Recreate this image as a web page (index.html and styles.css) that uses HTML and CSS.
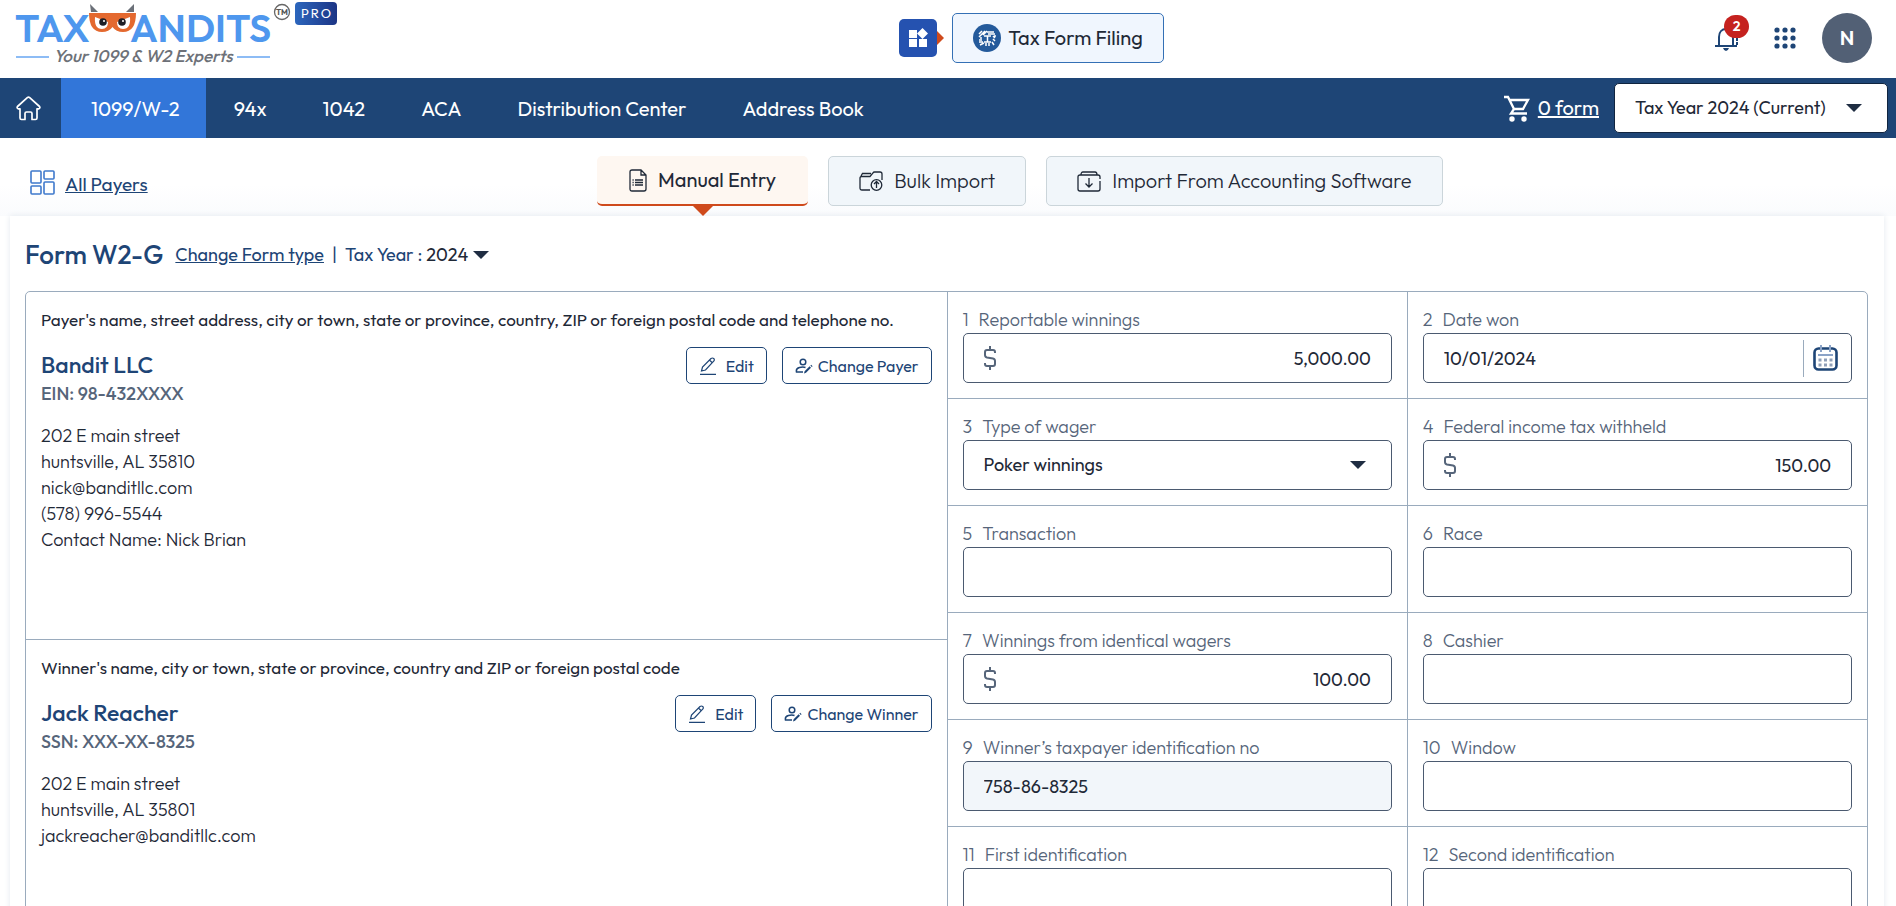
FILE: index.html
```html
<!DOCTYPE html>
<html lang="en">
<head>
<meta charset="utf-8">
<title>Form W2-G</title>
<link rel="stylesheet" href="styles.css">
</head>
<body>
<header class="topbar">
  <a class="brand" href="#" aria-label="Home page">
    <svg class="brand-logo" width="280" height="68" viewBox="0 0 280 68">
      <text class="logo-word" x="3" y="42">TAX</text>
      <text class="logo-word" x="118" y="42">ANDITS</text>
      <path fill="#6b7078" d="M78 4l8 8h-7zM122 4l-8 8h8z"/>
      <path fill="#e4692f" d="M77 13h47q0 19-13 19q-7 0-10.500-5q-3.500 5-10.500 5q-13 0-13-19z"/>
      <path fill="#fff" d="M83 17l13 5q0 7-6 7q-8 0-7-12zM118 17l-13 5q0 7 6 7q8 0 7-12z"/>
      <circle cx="91" cy="22" r="3.800" fill="#1d1f26"/><circle cx="110" cy="22" r="3.800" fill="#1d1f26"/>
      <circle cx="92" cy="21" r="1" fill="#fff"/><circle cx="111" cy="21" r="1" fill="#fff"/>
      <path stroke="#8dbcf5" stroke-width="2" d="M4 57h33M225 57h33"/>
      <text class="logo-tag" x="131" y="62" text-anchor="middle">Your 1099 &amp; W2 Experts</text>
      <circle cx="270" cy="12" r="7.500" fill="none" stroke="#666" stroke-width="1.300"/>
      <text class="logo-tm" x="270" y="15" text-anchor="middle">TM</text>
    </svg>
    <span class="pro">PRO</span>
  </a>
  <div class="product">
    <button class="product-switch" aria-label="Switch product">
      <svg width="20" height="20" viewBox="0 0 20 20" fill="#fff"><path d="M1 2h8v8H1zM1 11h8v8H1zM11 11h8v8h-8zM14.500 0l5.500 5.500-5.500 5.500L9 5.500z"/></svg>
    </button>
    <a class="product-name" href="#">
      <svg width="28" height="28" viewBox="0 0 28 28" fill="none" stroke="#fff" stroke-width="1.500">
        <circle cx="14" cy="14" r="14" fill="#245a9b" stroke="none"/>
        <path d="M6 10l3-3M6 13l6-6M10 11l4-4M14 8h7M15 10h7M20 12l2 2M20 15l2 2M19 18l2 3M6 16h3M6 18h4M7 21l4-2M13 22v-3M16 22v-3M11 12h7M14.500 12v6M11 18h7M8 13v2M22 11v2"/>
      </svg>
      Tax Form Filing
    </a>
  </div>
  <div class="account">
    <button class="bell" aria-label="Notifications">
      <svg width="28" height="28" viewBox="0 0 28 28" fill="none" stroke="#1e4576" stroke-width="2"><path d="M5 22V13c0-5 3-8 7-8s7 3 7 8v9M1 22h22"/><path fill="#1e4576" stroke="none" d="M9 24h6q-1 3-3 3t-3-3zM22 14h2v3h-2zM22 18h2v3h-2z"/></svg>
      <span class="badge">2</span>
    </button>
    <button class="apps" aria-label="Apps">
      <svg width="22" height="22" viewBox="0 0 22 22" fill="#1e4576"><circle cx="3" cy="3" r="2.600"/><circle cx="11" cy="3" r="2.600"/><circle cx="19" cy="3" r="2.600"/><circle cx="3" cy="11" r="2.600"/><circle cx="11" cy="11" r="2.600"/><circle cx="19" cy="11" r="2.600"/><circle cx="3" cy="19" r="2.600"/><circle cx="11" cy="19" r="2.600"/><circle cx="19" cy="19" r="2.600"/></svg>
    </button>
    <button class="avatar">N</button>
  </div>
</header>

<nav class="nav">
  <a class="nav-home" href="#" aria-label="Home">
    <svg width="25" height="25" viewBox="0 0 25 25" fill="none" stroke="#fff" stroke-width="1.700" stroke-linejoin="round"><path d="M1.500 10.500L11.300 1.700q1.200-1 2.400 0l9.800 8.800q1 1.600-.6 2.300H21V22q0 1.500-1.500 1.500H16v-6q0-1.500-1.500-1.500h-4Q9 16 9 17.500v6H5.500Q4 23.500 4 22v-9.200H2.100q-1.600-.7-.6-2.300z"/></svg>
  </a>
  <a class="nav-item active" href="#">1099/W-2</a>
  <a class="nav-item" href="#">94x</a>
  <a class="nav-item" href="#">1042</a>
  <a class="nav-item" href="#">ACA</a>
  <a class="nav-item" href="#">Distribution Center</a>
  <a class="nav-item" href="#">Address Book</a>
  <a class="cart" href="#">
    <svg width="27" height="27" viewBox="0 0 27 27" fill="none" stroke="#fff" stroke-width="2.300"><path d="M1 2h4l6 12h9l5-9H6.500M11 14l-3 4.500h16"/><circle cx="9" cy="24" r="2.700" fill="#fff" stroke="none"/><circle cx="21" cy="24" r="2.700" fill="#fff" stroke="none"/></svg>
    <span>0 form</span>
  </a>
  <div class="stack year-select">
    <select aria-label="Tax year"><option>Tax Year 2024 (Current)</option></select>
    <svg class="caret" width="16" height="8" viewBox="0 0 16 8"><path d="M0 0h16L8 8z"/></svg>
  </div>
</nav>

<main class="page">
  <div class="entrybar">
    <a class="all-payers" href="#">
      <svg width="26" height="26" viewBox="0 0 26 26" fill="none" stroke="#3f79cc" stroke-width="1.600"><rect x="1" y="1" width="10" height="12" rx="1"/><rect x="14" y="1" width="10" height="8" rx="1"/><rect x="1" y="16" width="10" height="8" rx="1"/><rect x="14" y="12" width="10" height="12" rx="1"/></svg>
      <span>All Payers</span>
    </a>
    <div class="tabs">
      <button class="tab tab-on">
        <svg width="18" height="23" viewBox="0 0 18 23" fill="none" stroke="#1f2937" stroke-width="1.300"><path d="M3 1h9l5 5v14q0 2-2 2H3q-2 0-2-2V3q0-2 2-2zM12 1v5h5M6 11h8M6 13.500h8M6 16h8M3.500 11h1.200M3.500 13.500h1.200M3.500 16h1.200"/></svg>
        Manual Entry
      </button>
      <button class="tab">
        <svg width="24" height="20" viewBox="0 0 24 20" fill="none" stroke="#1f2937" stroke-width="1.300"><path d="M11 19H3q-2 0-2-2V7q0-1.500 1.500-1.500H11L14 2q.5-1 1.500-1H21q2 0 2 2v6M2 5l1.500-2.500h8.500"/><circle cx="17.500" cy="14" r="5.300"/><path d="M17.500 17v-6M15 13l2.500-2.500L20 13"/></svg>
        Bulk Import
      </button>
      <button class="tab">
        <svg width="24" height="21" viewBox="0 0 24 21" fill="none" stroke="#1f2937" stroke-width="1.300"><path d="M23 8V6q0-2-2-2H3Q1 4 1 6v12q0 2 2 2h18q2 0 2-2v-8M4 4q0-3 2-3h12q2 0 2 3M12 7v9M8.500 12.500L12 16l3.500-3.500"/></svg>
        Import From Accounting Software
      </button>
    </div>
  </div>

  <section class="card">
    <div class="title-row">
      <h1>Form W2-G</h1>
      <a href="#">Change Form type</a>
      <span class="bar">|</span>
      <label for="form-year">Tax Year :</label>
      <div class="stack form-year">
        <select id="form-year"><option>2024</option></select>
        <svg class="caret" width="16" height="8" viewBox="0 0 16 8"><path d="M0 0h16L8 8z"/></svg>
      </div>
    </div>

    <div class="form">
      <div class="parties">
        <section class="party">
          <p class="party-label">Payer's name, street address, city or town, state or province, country, ZIP or foreign postal code and telephone no.</p>
          <div class="party-head">
            <div><h2>Bandit LLC</h2><p class="tin">EIN: 98-432XXXX</p></div>
            <div class="actions">
              <button class="btn btn-edit"><svg width="18" height="18" viewBox="0 0 18 18" fill="none" stroke="#1e4576" stroke-width="1.200"><path d="M1 17.300h16M2.500 14l1-4L12 1.500q1.500-1 2.700 0t0 2.700L6.500 13zM10.500 3L13 5.500"/></svg>Edit</button>
              <button class="btn"><svg width="18" height="16" viewBox="0 0 18 16" fill="none" stroke="#1e4576" stroke-width="1.500"><circle cx="8" cy="4" r="2.800"/><path d="M8 14H1.500q-.8-3.500 3-4.500 3.500-.8 6 0"/><path fill="#1e4576" stroke="none" d="M9 15.500l.6-2.200 5-5 1.400 1.400-5 5zM15.400 7.600l.8-.8 1.400 1.400-.8.8z"/></svg>Change Payer</button>
            </div>
          </div>
          <address>202 E main street<br>huntsville, AL 35810<br>nick@banditllc.com<br>(578) 996-5544<br>Contact Name: Nick Brian</address>
        </section>
        <section class="party">
          <p class="party-label">Winner's name, city or town, state or province, country and ZIP or foreign postal code</p>
          <div class="party-head">
            <div><h2>Jack Reacher</h2><p class="tin">SSN: XXX-XX-8325</p></div>
            <div class="actions">
              <button class="btn btn-edit"><svg width="18" height="18" viewBox="0 0 18 18" fill="none" stroke="#1e4576" stroke-width="1.200"><path d="M1 17.300h16M2.500 14l1-4L12 1.500q1.500-1 2.700 0t0 2.700L6.500 13zM10.500 3L13 5.500"/></svg>Edit</button>
              <button class="btn"><svg width="18" height="16" viewBox="0 0 18 16" fill="none" stroke="#1e4576" stroke-width="1.500"><circle cx="8" cy="4" r="2.800"/><path d="M8 14H1.500q-.8-3.500 3-4.500 3.500-.8 6 0"/><path fill="#1e4576" stroke="none" d="M9 15.500l.6-2.200 5-5 1.400 1.400-5 5zM15.400 7.600l.8-.8 1.400 1.400-.8.8z"/></svg>Change Winner</button>
            </div>
          </div>
          <address>202 E main street<br>huntsville, AL 35801<br>jackreacher@banditllc.com</address>
        </section>
      </div>

      <div class="boxes">
        <div class="box"><label for="b1"><span>1</span>Reportable winnings</label>
          <div class="stack money"><input id="b1" value="5,000.00"><svg class="dollar" width="14" height="24" viewBox="0 0 14 24"><path d="M7 0v4M7 20v4M12 7V6q0-2-2-2H4Q2 4 2 6v3q0 2 2 2.500l6 1q2 .5 2 2.500v3q0 2-2 2H4q-2 0-2-2v-1"/></svg></div></div>
        <div class="box"><label for="b2"><span>2</span>Date won</label>
          <div class="stack date"><input id="b2" value="10/01/2024">
            <button class="cal" aria-label="Pick a date"><svg width="25" height="26" viewBox="0 0 25 26" fill="none"><rect x="1.500" y="3.500" width="22" height="21" rx="4" stroke="#1e4576" stroke-width="2.600"/><path stroke="#8ba3c7" stroke-width="2" d="M8 0v7M17 0v7M5 10h15"/><path stroke="#8f9fb8" stroke-width="3" stroke-dasharray="3 2.500" d="M5.500 15h14M5.500 20h14"/></svg></button></div></div>
        <div class="box"><label for="b3"><span>3</span>Type of wager</label>
          <div class="stack wager"><select id="b3"><option>Poker winnings</option></select><svg class="caret" width="16" height="8" viewBox="0 0 16 8"><path d="M0 0h16L8 8z"/></svg></div></div>
        <div class="box"><label for="b4"><span>4</span>Federal income tax withheld</label>
          <div class="stack money"><input id="b4" value="150.00"><svg class="dollar" width="14" height="24" viewBox="0 0 14 24"><path d="M7 0v4M7 20v4M12 7V6q0-2-2-2H4Q2 4 2 6v3q0 2 2 2.500l6 1q2 .5 2 2.500v3q0 2-2 2H4q-2 0-2-2v-1"/></svg></div></div>
        <div class="box"><label for="b5"><span>5</span>Transaction</label><input id="b5"></div>
        <div class="box"><label for="b6"><span>6</span>Race</label><input id="b6"></div>
        <div class="box"><label for="b7"><span>7</span>Winnings from identical wagers</label>
          <div class="stack money"><input id="b7" value="100.00"><svg class="dollar" width="14" height="24" viewBox="0 0 14 24"><path d="M7 0v4M7 20v4M12 7V6q0-2-2-2H4Q2 4 2 6v3q0 2 2 2.500l6 1q2 .5 2 2.500v3q0 2-2 2H4q-2 0-2-2v-1"/></svg></div></div>
        <div class="box"><label for="b8"><span>8</span>Cashier</label><input id="b8"></div>
        <div class="box"><label for="b9"><span>9</span>Winner’s taxpayer identification no</label><input id="b9" class="locked" value="758-86-8325" readonly></div>
        <div class="box"><label for="b10"><span>10</span>Window</label><input id="b10"></div>
        <div class="box"><label for="b11"><span>11</span>First identification</label><input id="b11"></div>
        <div class="box"><label for="b12"><span>12</span>Second identification</label><input id="b12"></div>
      </div>
    </div>
  </section>
</main>
</body>
</html>
```
FILE: styles.css
```css
* { box-sizing: border-box; }
body {
  margin: 0;
  height: 100vh;
  display: flex;
  flex-direction: column;
  overflow: hidden;
  background: #fff;
  color: #1f2937;
  font: 18px/26px Outfit, Lato, sans-serif;
}
button, input, select { font: inherit; color: inherit; }
button { cursor: pointer; }
h1, h2, p { margin: 0; }
svg { flex: none; display: block; }

.topbar {
  flex: none;
  display: flex;
  justify-content: space-between;
  align-items: center;
  height: 78px;
  padding: 0 24px 2px 12px;
}
.brand { display: flex; align-self: flex-start; gap: 3px; text-decoration: none; }
.logo-word { font-size: 39px; font-weight: 600; fill: #4e97ee; }
.logo-tag { font-size: 17px; font-weight: 500; font-style: italic; fill: #6d7178; }
.logo-tm { font-size: 8px; font-weight: 700; fill: #555; }
.pro {
  height: 23px;
  margin-top: 2px;
  padding: 0 4px 0 6px;
  border-radius: 4px;
  background: linear-gradient(90deg, #2c66bd, #1c3585);
  color: #fff;
  font-size: 13px;
  line-height: 23px;
  letter-spacing: 2px;
}
.product { display: flex; align-items: center; gap: 15px; padding-left: 12px; }
.product-switch {
  position: relative;
  display: grid;
  place-items: center;
  width: 38px;
  height: 38px;
  padding: 0;
  border: 0;
  border-radius: 5px;
  background: #2552b0;
}
.product-switch::after {
  content: "";
  position: absolute;
  left: 100%;
  border: 7px solid transparent;
  border-right: 0;
  border-left-color: #cf4a1c;
}
.product-name {
  display: flex;
  align-items: center;
  gap: 7px;
  height: 50px;
  padding: 0 20px;
  border: 1px solid #3470b5;
  border-radius: 5px;
  background: #f0f6fe;
  color: #1f2937;
  font-size: 20px;
  font-weight: 400;
  text-decoration: none;
}
.account { display: flex; align-items: center; }
.bell, .apps { position: relative; padding: 0; border: 0; background: none; }
.bell { margin-right: 32px; }
.badge {
  position: absolute;
  top: -9px;
  right: -7px;
  width: 25px;
  height: 23px;
  border-radius: 12px;
  background: #c5221f;
  color: #fff;
  font-size: 14px;
  font-weight: 600;
  line-height: 23px;
}
.apps { margin-right: 26px; }
.avatar {
  width: 50px;
  height: 50px;
  padding: 0;
  border: 0;
  border-radius: 50%;
  background: #526075;
  color: #fff;
  font-weight: 600;
  font-size: 20px;
}

.nav { flex: none; display: flex; align-items: center; height: 60px; padding-right: 8px; background: #1e4576; }
.nav a { color: #fff; font-size: 20px; }
.nav-home { width: 61px; padding-left: 16px; }
.nav .nav-item { padding: 1px 28px 0; line-height: 59px; text-decoration: none; }
.nav .active { padding: 1px 26px 0 30px; background: #3276d9; }
.cart { display: flex; align-items: center; gap: 8px; margin: 0 15px 0 auto; }

.stack { display: grid; align-items: center; }
.stack > * { grid-area: 1 / 1; }
.stack > svg { pointer-events: none; }
.caret { justify-self: end; margin-right: 25px; fill: #1f2d42; }
select { appearance: none; width: 100%; border: 0; background: none; }
.year-select { width: 274px; height: 50px; border: 1px solid #10243f; border-radius: 5px; background: #fff; }
.year-select select { height: 48px; padding: 0 20px; }

.page { flex: 1; min-height: 0; overflow-y: auto; scrollbar-width: none; }
.entrybar { display: flex; align-items: flex-start; height: 78px; padding: 18px 0 0 30px; background: linear-gradient(#fff 60%, #fafbfd); }
.all-payers { display: flex; align-items: center; gap: 9px; padding-top: 12px; color: #1e4576; font-size: 19px; }
.all-payers span { padding-top: 3px; }
.tabs { flex: 1; display: flex; justify-content: center; gap: 20px; padding-right: 4px; }
.tab {
  display: flex;
  align-items: center;
  gap: 11px;
  height: 50px;
  padding: 0 30px;
  border: 1px solid #cbd5da;
  border-radius: 5px;
  background: #f1f6fa;
  font-size: 20px;
  font-weight: 350;
}
.tab-on { position: relative; padding: 0 32px; border: 0; border-bottom: 2px solid #cf4a1c; background: #fef7f1; font-weight: 400; }
.tab-on::after {
  content: "";
  position: absolute;
  top: 100%;
  left: 50%;
  margin-left: -12px;
  border: 12px solid transparent;
  border-bottom: 0;
  border-top-color: #cf4a1c;
}

.card { margin: 0 12px 0 10px; padding: 0 16px 24px 15px; background: #fff; box-shadow: 0 0 6px #e3e8ee; }
.title-row { display: flex; align-items: center; height: 75px; padding-top: 3px; color: #1e4576; }
.title-row h1 { margin-right: 12px; font-size: 26px; font-weight: 500; }
.title-row a { color: #1e4576; }
.bar { margin: 0 8px; }
.form-year { width: 67px; color: #1f2937; }
.form-year select { padding: 0 4px; }
.form-year .caret { margin: 0; }

.form { display: grid; grid-template-columns: 1fr 1fr; border: 1px solid #9aabbd; border-radius: 5px; }
.party { min-height: 347px; padding: 15px 15px 16px; }
.party + .party { border-top: 1px solid #9aabbd; }
.party-label { font-size: 17px; }
.party-head { display: flex; justify-content: space-between; margin-top: 14px; }
.party h2 { padding-top: 2px; color: #1e4576; font-size: 23px; font-weight: 500; line-height: 31px; }
.tin { color: #56657a; font-weight: 500; line-height: 28px; }
.actions { display: flex; align-items: flex-start; gap: 15px; }
.btn {
  display: flex;
  align-items: center;
  gap: 5px;
  height: 37px;
  padding: 0 12px;
  border: 1px solid #1e4576;
  border-radius: 5px;
  background: #fff;
  color: #1e4576;
  font-size: 16px;
}
.btn-edit { gap: 9px; }
address { margin-top: 15px; font-style: normal; font-weight: 300; }

.boxes { display: grid; grid-template-columns: 1fr 1fr; align-content: start; }
.box { min-width: 0; height: 107px; padding: 15px 15px 0; border-left: 1px solid #9aabbd; border-bottom: 1px solid #9aabbd; }
.box label { display: flex; gap: 10px; height: 26px; color: #56657a; font-weight: 300; }
.box input, .wager {
  width: 100%;
  height: 50px;
  padding: 0 20px;
  border: 1px solid #4b5a70;
  border-radius: 5px;
  background: #fff;
}
.money input { text-align: right; }
.dollar { margin-left: 20px; fill: none; stroke: #56657a; stroke-width: 2; }
.box .wager { padding: 0; }
.wager select { height: 48px; padding: 0 20px; }
.cal { justify-self: end; display: grid; place-items: center; width: 49px; height: 37px; padding: 0 5px 0 0; border: 0; border-left: 1px solid #9aabbd; background: none; }
.box .locked { background: #f2f6fa; }
```
